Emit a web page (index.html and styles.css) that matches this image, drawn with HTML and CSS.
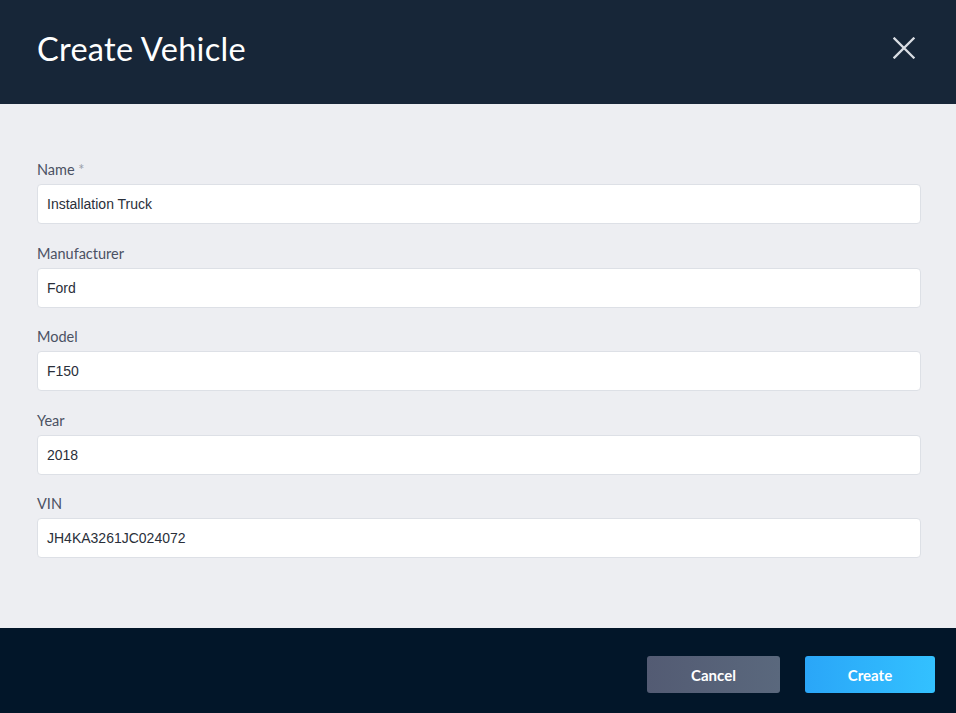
FILE: index.html
```html
<!DOCTYPE html>
<html>
<head>
<meta charset="utf-8">
<link rel="stylesheet" href="styles.css">
</head>
<body>
<div class="modal">
  <header class="header">
    <h1 class="title">Create Vehicle</h1>
    <button class="close" aria-label="Close">
      <svg width="22" height="22" viewBox="0 0 22 22"><path d="M1.5 1.5 L20.5 20.5 M20.5 1.5 L1.5 20.5" stroke="#d9dde3" stroke-width="2.3" stroke-linecap="square" fill="none"/></svg>
    </button>
  </header>
  <main class="body">
    <div class="field">
      <label class="label">Name <span class="req">*</span></label>
      <div class="input">Installation Truck</div>
    </div>
    <div class="field">
      <label class="label">Manufacturer</label>
      <div class="input">Ford</div>
    </div>
    <div class="field">
      <label class="label">Model</label>
      <div class="input">F150</div>
    </div>
    <div class="field">
      <label class="label">Year</label>
      <div class="input">2018</div>
    </div>
    <div class="field">
      <label class="label">VIN</label>
      <div class="input">JH4KA3261JC024072</div>
    </div>
  </main>
  <footer class="footer">
    <button class="btn btn-cancel">Cancel</button>
    <button class="btn btn-create">Create</button>
  </footer>
</div>
</body>
</html>
```

FILE: styles.css
```css
html, body {
  margin: 0;
  padding: 0;
}
body {
  width: 956px;
  height: 713px;
  overflow: hidden;
  font-family: Lato, "Noto Sans", sans-serif;
}
.modal {
  display: flex;
  flex-direction: column;
  height: 713px;
}
.header {
  height: 104px;
  background: #172638;
  display: flex;
  align-items: center;
  justify-content: space-between;
  padding: 0 41px 8px 37px;
  box-sizing: border-box;
}
.title {
  margin: 0;
  color: #ffffff;
  font-weight: 400;
  font-size: 32.5px;
  letter-spacing: 0.3px;
}
.close {
  background: none;
  border: 0;
  padding: 0;
  width: 22px;
  height: 22px;
  display: flex;
  cursor: pointer;
}
.body {
  flex: 1;
  background: #edeef2;
  padding: 56px 35px 0 37px;
  box-sizing: border-box;
}
.field {
  display: flex;
  flex-direction: column;
  margin-bottom: 19.5px;
}
.label {
  font-size: 14.5px;
  line-height: 20px;
  color: #4b5163;
  margin-bottom: 4px;
}
.req {
  color: #9aa0aa;
}
.input {
  height: 40px;
  box-sizing: border-box;
  background: #ffffff;
  border: 1px solid #dde0e6;
  border-radius: 4px;
  padding: 0 9px;
  display: flex;
  align-items: center;
  font-family: "Liberation Sans", Arial, sans-serif;
  font-size: 14px;
  color: #2a2f3a;
}
.footer {
  height: 85px;
  background: #021629;
  display: flex;
  justify-content: flex-end;
  align-items: flex-start;
  padding: 28px 21px 0 0;
  box-sizing: border-box;
  gap: 25px;
}
.btn {
  height: 37px;
  border: 0;
  border-radius: 3px;
  color: #ffffff;
  font-family: Lato, "Noto Sans", sans-serif;
  font-weight: 700;
  font-size: 15px;
  cursor: pointer;
}
.btn-cancel {
  width: 133px;
  background: linear-gradient(90deg, #535b73, #5a687d);
}
.btn-create {
  width: 130px;
  background: linear-gradient(90deg, #2aa6f8, #33c1ff);
}
```
